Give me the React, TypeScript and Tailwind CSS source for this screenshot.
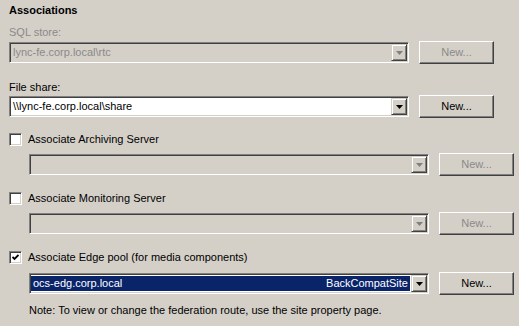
import type { ReactNode } from 'react'

const FONT = "font-['Liberation_Sans',Arial,sans-serif]"

// classic 3d edges
const sunken = 'border border-t-[#808080] border-l-[#808080] border-b-white border-r-white shadow-[inset_1px_1px_0_#404040,inset_-1px_-1px_0_#d4d0c8]'
const raised = 'border border-t-white border-l-white border-b-[#404040] border-r-[#404040] shadow-[inset_-1px_-1px_0_#808080]'

function Arrow({ disabled }: { disabled?: boolean }) {
  return (
    <div className={`w-[16px] h-[17px] flex items-center justify-center bg-[#d4d0c8] border border-t-[#d4d0c8] border-l-[#d4d0c8] border-b-[#404040] border-r-[#404040] shadow-[inset_1px_1px_0_#fff,inset_-1px_-1px_0_#808080]`}>
      <svg width="7" height="4" viewBox="0 0 7 4" className="mt-[1px]">
        <polygon points="0,0 7,0 3.5,4" fill={disabled ? '#808080' : '#000'} />
      </svg>
    </div>
  )
}

function Combo({ value, disabled, children }: { value?: string; disabled?: boolean; children?: ReactNode }) {
  return (
    <div className={`w-[400px] h-[21px] flex items-center ${sunken} ${disabled ? 'bg-[#d4d0c8]' : 'bg-white'}`}>
      <div className="flex-1 h-full flex items-center min-w-0">
        {children ?? (
          <span className={`pl-[3px] leading-none ${disabled ? 'text-[#8a8a8a]' : 'text-black'}`}>{value}</span>
        )}
      </div>
      <div className="pr-[1px]"><Arrow disabled={disabled} /></div>
    </div>
  )
}

function NewButton({ disabled }: { disabled?: boolean }) {
  return (
    <button className={`w-[75px] h-[23px] bg-[#d4d0c8] flex items-center justify-center ${raised} ${disabled ? 'text-[#8a8a8a]' : 'text-black'}`}>
      New...
    </button>
  )
}

function Row({ children, indent }: { children: ReactNode; indent?: boolean }) {
  return (
    <div className={`flex items-center gap-[10px] h-[23px] ${indent ? 'pl-[20px]' : ''}`}>
      {children}
    </div>
  )
}

function Check({ checked, label }: { checked?: boolean; label: string }) {
  return (
    <div className="flex items-center h-[14px] gap-[6px]">
      <div className={`w-[13px] h-[13px] bg-white flex items-center justify-center ${sunken}`}>
        {checked && (
          <svg width="7" height="7" viewBox="0 0 7 7">
            <polyline points="0.5,3 2.5,5 6.5,1" fill="none" stroke="#000" strokeWidth="1.8" />
          </svg>
        )}
      </div>
      <span className="leading-none">{label}</span>
    </div>
  )
}

export default function App() {
  return (
    <div className={`w-[519px] h-[326px] bg-[#d4d0c8] pl-[9px] pt-[3px] text-[11px] text-black ${FONT}`}>
      <div className="font-bold leading-[14px]">Associations</div>

      <div className="mt-[8px] leading-[14px] text-[#8a8a8a]">SQL store:</div>
      <div className="mt-[2px]">
        <Row>
          <Combo value="lync-fe.corp.local\rtc" disabled />
          <NewButton disabled />
        </Row>
      </div>

      <div className="mt-[16px] leading-[14px]">File share:</div>
      <div className="mt-[1px]">
        <Row>
          <Combo value="\\lync-fe.corp.local\share" />
          <NewButton />
        </Row>
      </div>

      <div className="mt-[14px]"><Check label="Associate Archiving Server" /></div>
      <div className="mt-[7px]">
        <Row indent>
          <Combo disabled />
          <NewButton disabled />
        </Row>
      </div>

      <div className="mt-[15px]"><Check label="Associate Monitoring Server" /></div>
      <div className="mt-[7px]">
        <Row indent>
          <Combo disabled />
          <NewButton disabled />
        </Row>
      </div>

      <div className="mt-[15px]"><Check checked label="Associate Edge pool (for media components)" /></div>
      <div className="mt-[8px]">
        <Row indent>
          <Combo>
            <div className="flex-1 h-[15px] ml-[1px] mr-[1px] bg-[#0a246a] text-white flex items-center justify-between px-[2px]">
              <span className="leading-none">ocs-edg.corp.local</span>
              <span className="leading-none">BackCompatSite</span>
            </div>
          </Combo>
          <NewButton />
        </Row>
      </div>

      <div className="mt-[8px] pl-[20px] leading-[14px]">
        Note: To view or change the federation route, use the site property page.
      </div>
    </div>
  )
}
